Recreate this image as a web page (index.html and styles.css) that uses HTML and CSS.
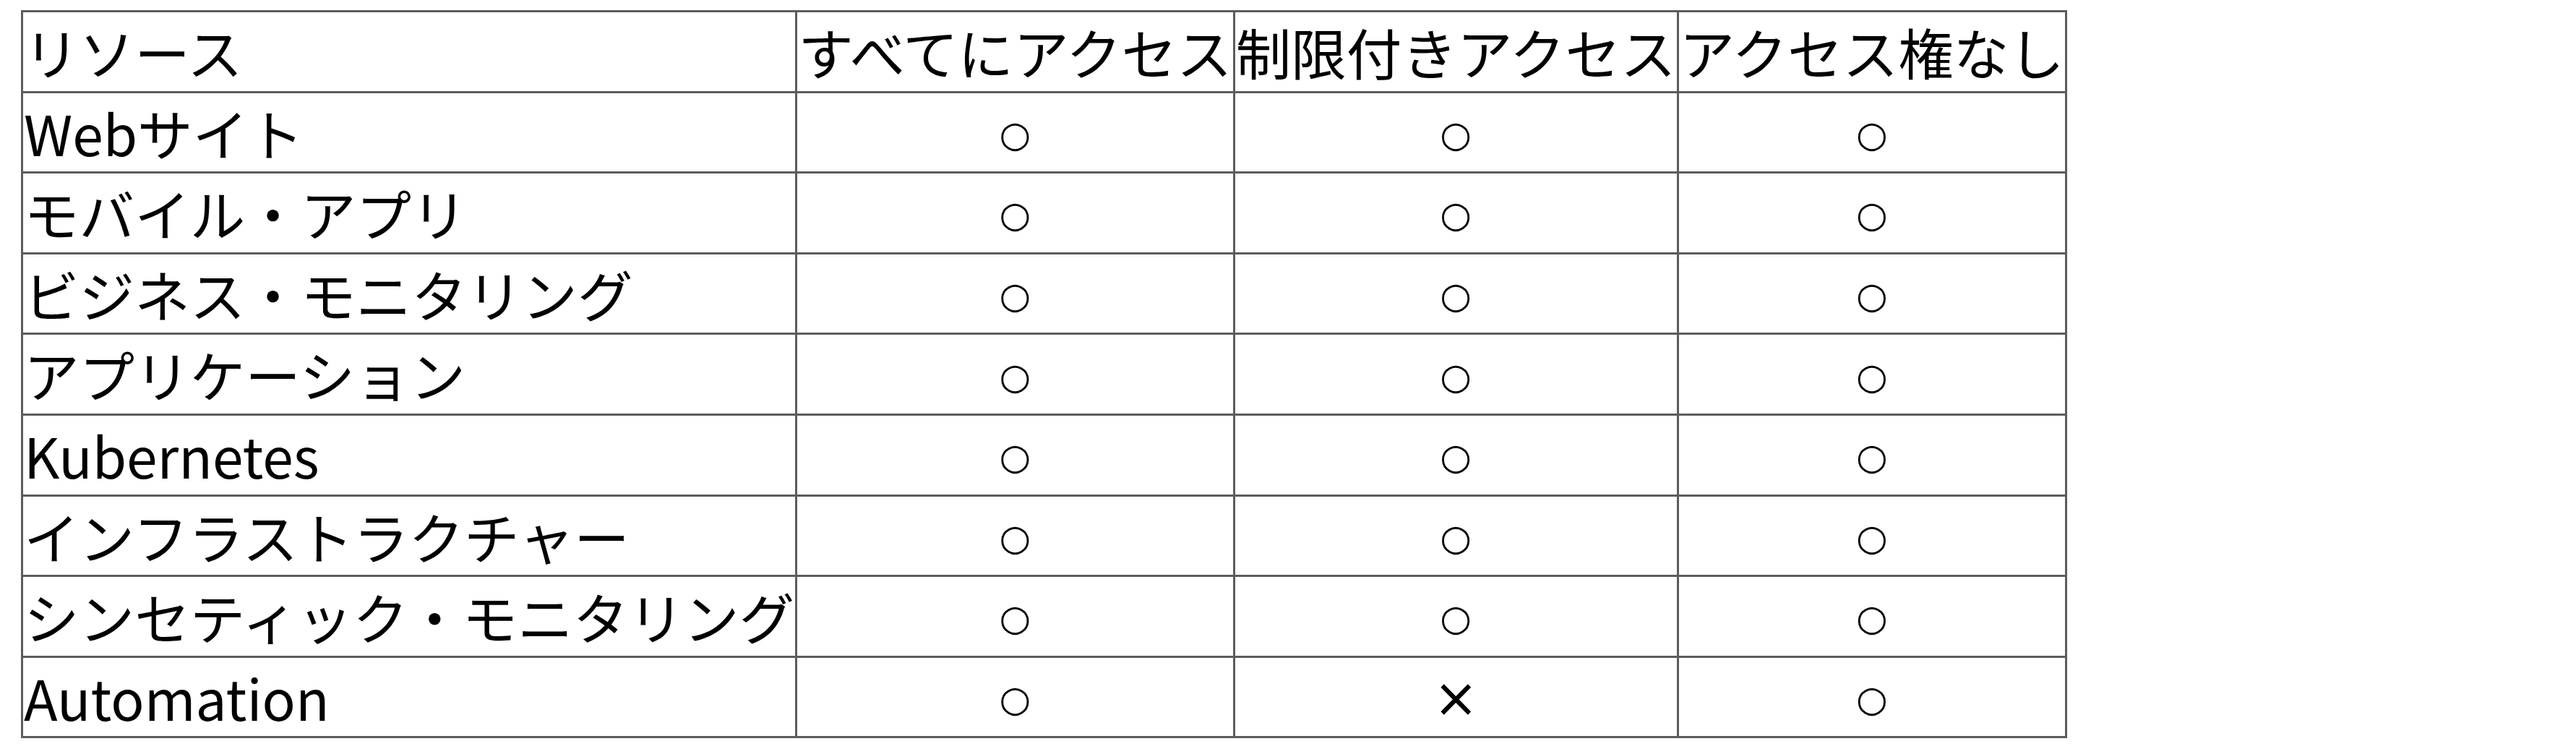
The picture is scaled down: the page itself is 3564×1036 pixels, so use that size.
FILE: index.html
```html
<!DOCTYPE html>
<html lang="ja">
<head>
<meta charset="utf-8">
<title>アクセス権</title>
<link rel="stylesheet" href="styles.css">
</head>
<body>
<table class="access">
  <thead>
    <tr>
      <th class="name">リソース</th>
      <th>すべてにアクセス</th>
      <th>制限付きアクセス</th>
      <th>アクセス権なし</th>
    </tr>
  </thead>
  <tbody>
    <tr><td class="name">Webサイト</td><td class="mark"><span class="yes">○</span></td><td class="mark"><span class="yes">○</span></td><td class="mark"><span class="yes">○</span></td></tr>
    <tr><td class="name">モバイル・アプリ</td><td class="mark"><span class="yes">○</span></td><td class="mark"><span class="yes">○</span></td><td class="mark"><span class="yes">○</span></td></tr>
    <tr><td class="name">ビジネス・モニタリング</td><td class="mark"><span class="yes">○</span></td><td class="mark"><span class="yes">○</span></td><td class="mark"><span class="yes">○</span></td></tr>
    <tr><td class="name">アプリケーション</td><td class="mark"><span class="yes">○</span></td><td class="mark"><span class="yes">○</span></td><td class="mark"><span class="yes">○</span></td></tr>
    <tr><td class="name">Kubernetes</td><td class="mark"><span class="yes">○</span></td><td class="mark"><span class="yes">○</span></td><td class="mark"><span class="yes">○</span></td></tr>
    <tr><td class="name">インフラストラクチャー</td><td class="mark"><span class="yes">○</span></td><td class="mark"><span class="yes">○</span></td><td class="mark"><span class="yes">○</span></td></tr>
    <tr><td class="name">シンセティック・モニタリング</td><td class="mark"><span class="yes">○</span></td><td class="mark"><span class="yes">○</span></td><td class="mark"><span class="yes">○</span></td></tr>
    <tr><td class="name">Automation</td><td class="mark"><span class="yes">○</span></td><td class="mark"><span class="no">×</span></td><td class="mark"><span class="yes">○</span></td></tr>
  </tbody>
</table>
</body>
</html>
```

FILE: styles.css
```css
html, body {
  background: #ffffff;
}

body {
  margin: 0;
  padding: 14px 0 0 29px;
  font-family: "Noto Sans CJK JP", "Noto Sans", sans-serif;
  color: #000000;
}

.access {
  border-collapse: collapse;
  border: 3px solid #5c5c5c;
  font-size: 76.6px;
  line-height: 108.6px;
}

.access th,
.access td {
  border: 3px solid #5c5c5c;
  padding: 0 1px;
  font-weight: 400;
  white-space: nowrap;
  vertical-align: middle;
}

.access th {
  text-align: left;
}

.access .name {
  text-align: left;
}

.access .mark {
  text-align: center;
}

.yes,
.no {
  display: inline-block;
  font-family: "DejaVu Sans", sans-serif;
  line-height: 1;
  vertical-align: middle;
  position: relative;
}

.yes {
  font-size: 50px;
  top: -9px;
}

.no {
  font-size: 74px;
  top: -11px;
}
```
